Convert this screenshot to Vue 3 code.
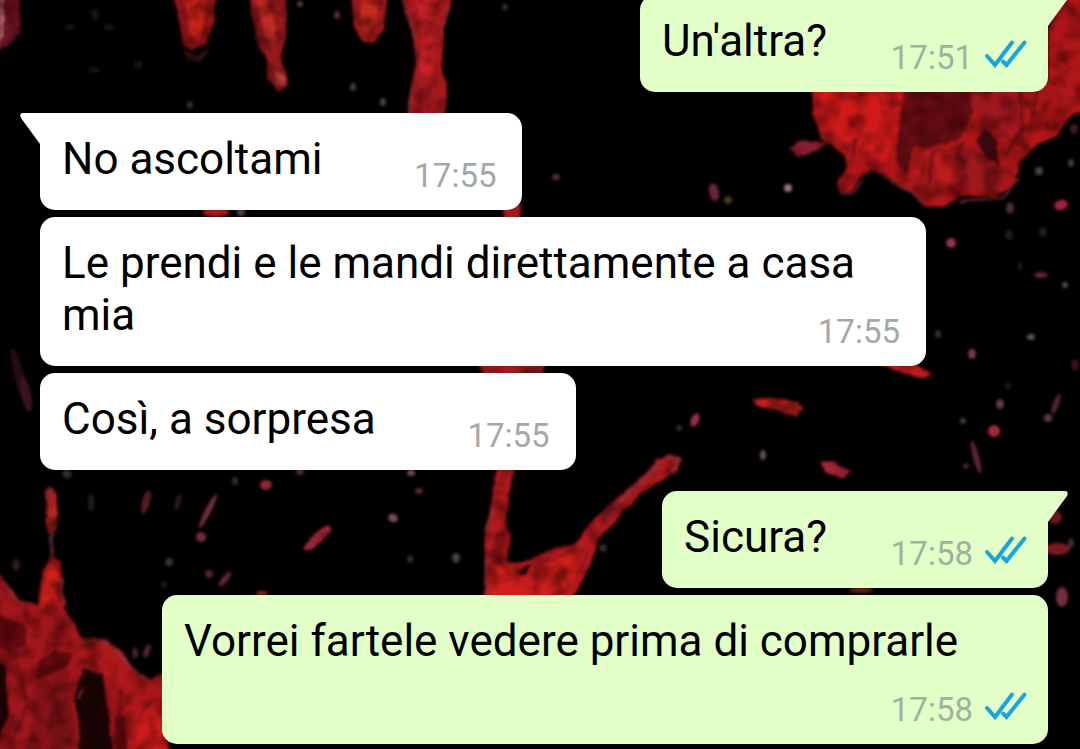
<script setup>
const groups = [
  { out: true, messages: [{ text: "Un'altra?", time: '17:51' }] },
  {
    out: false,
    messages: [
      { text: 'No ascoltami', time: '17:55' },
      { text: 'Le prendi e le mandi direttamente a casa mia', time: '17:55' },
      { text: 'Così, a sorpresa', time: '17:55' },
    ],
  },
  {
    out: true,
    messages: [
      { text: 'Sicura?', time: '17:58' },
      { text: 'Vorrei fartele vedere prima di comprarle', time: '17:58' },
    ],
  },
]

// x, y, rx, ry, rotation, colour
const specks = [
  [300, 4, 3, 3, 0, '#554448'], [337, 15, 3, 4, 0, '#6b2f40'], [353, 87, 3, 4, 0, '#4a4448'],
  [190, 105, 3, 4, 0, '#333'], [505, 7, 3, 3, 0, '#383838'], [383, 102, 3, 4, 0, '#5a4452'],
  [95, 15, 4, 6, 0, '#181818'], [70, 27, 4, 3, 0, '#181818'], [109, 27, 5, 3, 0, '#1a1a1a'],
  [94, 70, 6, 3, 0, '#181818'], [138, 65, 4, 4, 0, '#141414'],
  [556, 177, 4, 3, 0, '#5d3541'], [714, 192, 5, 9, -12, '#742a3a'], [728, 200, 4, 4, 0, '#4b4129'],
  [788, 188, 4, 4, 0, '#a58790'], [1039, 171, 4, 4, 0, '#5a474d'], [1071, 163, 3, 4, 0, '#444'],
  [1074, 129, 4, 5, 0, '#4a1c25'], [1061, 205, 7, 5, -15, '#b52840'], [1010, 208, 4, 6, 0, '#573238'],
  [951, 243, 5, 5, 0, '#a03b55'], [1009, 235, 4, 5, 0, '#222'], [1043, 232, 4, 5, 0, '#222'],
  [1041, 275, 7, 3, 0, '#6c2a3a'], [1065, 285, 3, 3, 0, '#555'], [1020, 266, 2, 4, 0, '#2d1d1d'],
  [938, 334, 3, 4, 0, '#393939'], [972, 354, 4, 5, 0, '#874052'], [1031, 337, 4, 3, 0, '#646464'],
  [1000, 404, 4, 5, 0, '#74404d'], [963, 421, 3, 3, 0, '#484848'], [994, 431, 6, 6, 0, '#b72d39'],
  [1056, 404, 3, 11, 20, '#5b2b35'], [1048, 418, 4, 4, 0, '#63404a'], [976, 457, 3, 17, -15, '#6e2b3b'],
  [966, 466, 3, 3, 0, '#4b2732'], [1075, 365, 4, 6, 0, '#44111d'], [1008, 386, 3, 3, 0, '#222'],
  [695, 420, 4, 7, 25, '#a73650'], [679, 428, 3, 3, 0, '#393030'], [763, 455, 3, 5, 0, '#715b70'],
  [67, 474, 5, 4, 0, '#343434'], [91, 503, 3, 9, 0, '#222'], [146, 502, 4, 12, 15, '#621b26'],
  [178, 502, 3, 9, 15, '#34171b'], [208, 511, 3, 19, 27, '#7e3342'], [201, 537, 5, 5, 0, '#85333f'],
  [266, 485, 6, 5, 0, '#9c2d3a'], [235, 481, 3, 4, 0, '#393039'], [300, 472, 4, 3, 0, '#57383a'],
  [169, 562, 4, 4, 0, '#383c35'], [209, 574, 4, 4, 0, '#632629'], [225, 579, 3, 9, 40, '#6b2f35'],
  [16, 565, 4, 6, 0, '#321a25'], [164, 585, 3, 3, 0, '#301820'], [262, 593, 6, 2, 0, '#9a301f'],
  [135, 653, 3, 6, 0, '#4a252f'], [147, 651, 3, 7, 20, '#622a35'],
  [411, 473, 4, 3, 0, '#7b5667'], [419, 491, 4, 3, 0, '#69283c'], [393, 518, 5, 4, 20, '#8d5267'],
  [410, 559, 3, 4, 0, '#333'], [456, 558, 4, 5, 0, '#4a4a4a'], [603, 548, 4, 4, 0, '#332d36'],
  [19, 375, 5, 28, -14, '#2b0a12'], [26, 394, 5, 18, -12, '#411522'], [50, 495, 5, 8, 0, '#9c2427'],
  [1055, 517, 7, 7, 0, '#711c25'], [1057, 549, 13, 6, 0, '#8a1d26'], [1071, 543, 3, 5, 0, '#46333b'],
  [1062, 597, 6, 10, 0, '#813347'], [861, 590, 12, 3, 0, '#702015'],
  [216, 212, 13, 5, 0, '#b51d1c'], [241, 212, 4, 4, 0, '#5d4442'], [512, 210, 9, 14, 0, '#b51a23'],
]
</script>

<template>
  <main class="chat">
    <svg class="wallpaper" viewBox="0 0 1080 749" preserveAspectRatio="xMidYMid slice" aria-hidden="true">
      <defs>
        <filter id="soft" x="-5%" y="-5%" width="110%" height="110%" color-interpolation-filters="sRGB">
          <feTurbulence type="fractalNoise" baseFrequency="0.06" numOctaves="3" seed="4" result="n" />
          <feDisplacementMap in="SourceGraphic" in2="n" scale="4" xChannelSelector="R" yChannelSelector="G" result="d" />
          <feColorMatrix in="n" values="0 0 0 0 0.15  0 0 0 0 0  0 0 0 0 0  0 0 1.3 0 -0.5" result="shade" />
          <feComposite in="shade" in2="d" operator="atop" />
          <feGaussianBlur stdDeviation="1.8" />
        </filter>
        <filter id="dots" x="-5%" y="-5%" width="110%" height="110%"><feGaussianBlur stdDeviation="1.8" /></filter>
      </defs>
      <rect width="1080" height="749" fill="#000" />
      <g filter="url(#soft)">
        <path fill="#6b1320" d="M-6-8H18L21 26 8 42-6 56Z" />
        <path fill="#b0656f" d="M0-6H5L3 35-1 45Z" />
        <path fill="#4c1520" d="M18 28L22 31 6 48 3 46Z" />

        <path fill="#8f1417" d="M171-8H217L214 20 207 44 193 49 183 46 180 24Z" />
        <path fill="#c62219" d="M183-5H207L203 25 198 40 190 35Z" />
        <path fill="#2d1518" d="M184 48L197 56 210 46 201 62 188 59Z" />

        <path fill="#94181c" d="M249-8H286L286 38 281 55 288 86 278 92 268 80 267 59 255 37Z" />
        <path fill="#c02a23" d="M254-4H268L276 28 274 51 265 34Z" />
        <path fill="#bd4243" d="M275 72L284 76 285 86 276 86Z" />

        <path fill="#a01b1c" d="M351-8H388L384 29 374 43 362 42 354 26Z" />
        <path fill="#c82b1d" d="M361-5H378L376 22 367 34 359 17Z" />
        <path fill="#a6191e" d="M401-8H454L445 25 442 64 447 91 446 116H406L412 80 416 64 413 36Z" />
        <path fill="#c92025" d="M414-6H438L430 25 436 65 434 78 420 70 421 32Z" />
        <path fill="#841219" d="M417 92L434 82 428 99 416 107Z" />
        <path fill="none" stroke="#853741" stroke-width="2" d="M403 0L411 27 416 38M450 6L441 34M414 83L408 112" />

        <path fill="#b01618" d="M810 82L814 118 821 137 831 144 844 157 847 167 837 184 840 195 850 192 860 178 872 169 885 174 905 188 925 207 943 208 960 196 995 197 1014 185 1020 164 1036 145 1057 136 1070 116 1090 110V-8H1066L1048 28V82Z" />
        <path fill="#862030" d="M812 141L798 142 790 149 798 156 820 150 829 142Z" />
        <path fill="#d01a1a" d="M820 84H904L897 142 882 165 858 148 840 138 820 112Z" />
        <path fill="#640c14" d="M907 84H976L976 107 958 139 933 151 914 145 907 175 896 162 899 120Z" />
        <path fill="#a0171d" d="M974 84H1018V124L1002 145 994 132 982 128 971 106Z" />
        <path fill="#3a0710" d="M984 128L996 140 1000 167 988 158 976 142Z" />
        <path fill="#bd1c1c" d="M918 154L942 143 957 154 950 184 941 202 923 195 914 177Z" />
        <path fill="#9c181e" d="M954 151L974 145 994 166 1011 174 997 192 964 188Z" />
        <path fill="none" stroke="#71101a" stroke-width="3" d="M1020 84L1022 129 1006 155M1037 89L1031 125M855 139L853 157M933 152L929 184M964 142L957 154 966 165" />
        <path fill="none" stroke="#752f36" stroke-width="2" d="M842 195L852 193 862 180M884 176L924 201M959 201L1003 198 1019 178" />

        <path fill="#b91c1c" d="M874 361H910L932 374 925 378 893 371Z" />
        <path fill="#c4221e" d="M752 399L772 398 796 401 804 409 796 417 776 410 757 406Z" />
        <path fill="#a82838" d="M820 462L833 461 849 471 844 479 826 472Z" />
        <path fill="#9c1b1e" d="M479 362H546L540 377H484Z" />

        <path fill="#b0191e" d="M497 464H514L509 500 507 522 511 535 508 563 524 562 548 551 575 544 590 523 607 507 636 482 658 460 672 454 682 458 677 471 664 479 641 494 610 526 599 538 592 563 570 603H484L485 533Z" />
        <path fill="#d01e1c" d="M493 566L526 571 580 550 586 555 574 580 548 602H489Z" />
        <path fill="#861013" d="M496 532L504 531 502 565 494 565 491 548Z" />
        <path fill="#000" d="M518 573L531 563 526 576Z" />
        <path fill="none" stroke="#803d45" stroke-width="2" d="M669 475L680 460 667 456M659 464L604 519M486 558L487 596M492 506L486 534" />

        <path fill="#b82820" d="M49 491L56 492 59 514 55 532 49 534 45 520Z" />
        <path fill="#512736" d="M50 532H54V561H50Z" />
        <path fill="#a2161b" d="M-7 567L8 582 19 600 38 604 42 574 51 556 61 561 64 610 75 624 81 638 107 639 121 651 136 672 151 679 169 670V760H-7Z" />
        <path fill="#d02019" d="M48 565L58 567 60 607 40 607Z" />
        <path fill="#b0181a" d="M60 644L108 645 132 673 155 684 169 678V760H132L115 705 94 659 65 658Z" />
        <path fill="#cc1c1a" d="M169 690L142 715 132 760H169Z" />
        <path fill="#160304" d="M83 668L103 674 109 724 114 755H78L80 721 73 702Z" />
        <path fill="#63090f" d="M-6 613L25 625 26 643 10 654-6 644ZM38 662L56 650 73 653 67 667 37 680ZM115 715L125 715 127 753H114Z" />
        <path fill="#160203" d="M-6 657L5 667 8 715-6 753Z" />
        <path fill="#871319" d="M32 690L38 681 70 670 68 700 78 725 65 755H25L33 725Z" />
        <path fill="none" stroke="#7c1117" stroke-width="3" d="M13 648L28 705 9 748M43 654L49 644 63 644M121 690L119 720M36 714L31 735M59 675L50 701" />
        <path fill="none" stroke="#92404b" stroke-width="2" d="M5 584L18 602M62 576L64 603M79 643L105 642 119 654 131 668 147 681M83 688L77 699" />
        <path fill="#a3293b" d="M304 547L315 533 328 525 332 530 320 544 306 551Z" />
      </g>
      <g filter="url(#dots)" opacity="0.9">
        <ellipse
          v-for="([x, y, rx, ry, turn, fill], i) in specks"
          :key="i" :cx="x" :cy="y" :rx="rx" :ry="ry" :fill="fill"
          :transform="`rotate(${turn} ${x} ${y})`"
        />
      </g>
    </svg>

    <section v-for="(group, g) in groups" :key="g" class="group" :class="group.out ? 'out' : 'in'">
      <article v-for="(message, m) in group.messages" :key="m" class="bubble">
        <svg v-if="m === 0" class="tail" viewBox="0 0 21 31" aria-hidden="true">
          <path d="M21 0H3Q-1 0 1 5L20 31H21Z" />
        </svg>
        <p class="text">{{ message.text }}<span class="reserve"></span></p>
        <footer class="meta">
          <time>{{ message.time }}</time>
          <svg v-if="group.out" class="ticks" viewBox="0 0 42 28" role="img" aria-label="Letto">
            <path d="M2 15L10 24 27 1.500M18 20.500L21.500 24 39.500 1.500" />
          </svg>
        </footer>
      </article>
    </section>
  </main>
</template>

<style>
body {
  margin: 0;
  background: #000;
}
</style>

<style scoped>
.chat {
  position: relative;
  box-sizing: border-box;
  height: 100vh;
  overflow: hidden;
  display: flex;
  flex-direction: column;
  justify-content: flex-end;
  gap: 21px;
  padding: 0 32px 5px 40px;
  font-family: Roboto, "Noto Sans", sans-serif;
}
.wallpaper {
  position: absolute;
  inset: 0;
  width: 100%;
  height: 100%;
}
.group {
  position: relative;
  flex: none;
  display: flex;
  flex-direction: column;
  gap: 7px;
}
.in {
  align-items: flex-start;
  padding-right: 122px;
}
.out {
  align-items: flex-end;
  padding-left: 122px;
}
.bubble {
  position: relative;
  display: grid;
  box-sizing: border-box;
  max-width: 100%;
  padding: 20px 26px 17px 22px;
  border-radius: 15px;
  background: #fff;
}
.out .bubble {
  padding-right: 21px;
  background: #e1ffc7;
}
.in .bubble:first-child {
  border-top-left-radius: 0;
}
.out .bubble:first-child {
  border-top-right-radius: 0;
}
.tail {
  position: absolute;
  top: 0;
  left: -20px;
  width: 21px;
  height: 31px;
  fill: #fff;
}
.out .tail {
  left: auto;
  right: -20px;
  transform: scaleX(-1);
  fill: #e1ffc7;
}
.text {
  grid-area: 1 / 1;
  margin: 0 0 8px;
  font-size: 44px;
  line-height: 52px;
  color: #000;
}
.reserve {
  display: inline-block;
  width: 174px;
}
.out .reserve {
  width: 200px;
}
.meta {
  grid-area: 1 / 1;
  place-self: end;
  display: flex;
  align-items: flex-start;
  gap: 12px;
  font-size: 33px;
  line-height: 34px;
  color: #a4a8a8;
}
.out .meta {
  color: #a3b0a0;
}
.ticks {
  width: 42px;
  height: 28px;
  overflow: visible;
  fill: none;
  stroke: #1ba5df;
  stroke-width: 4;
  stroke-linecap: round;
}
</style>
